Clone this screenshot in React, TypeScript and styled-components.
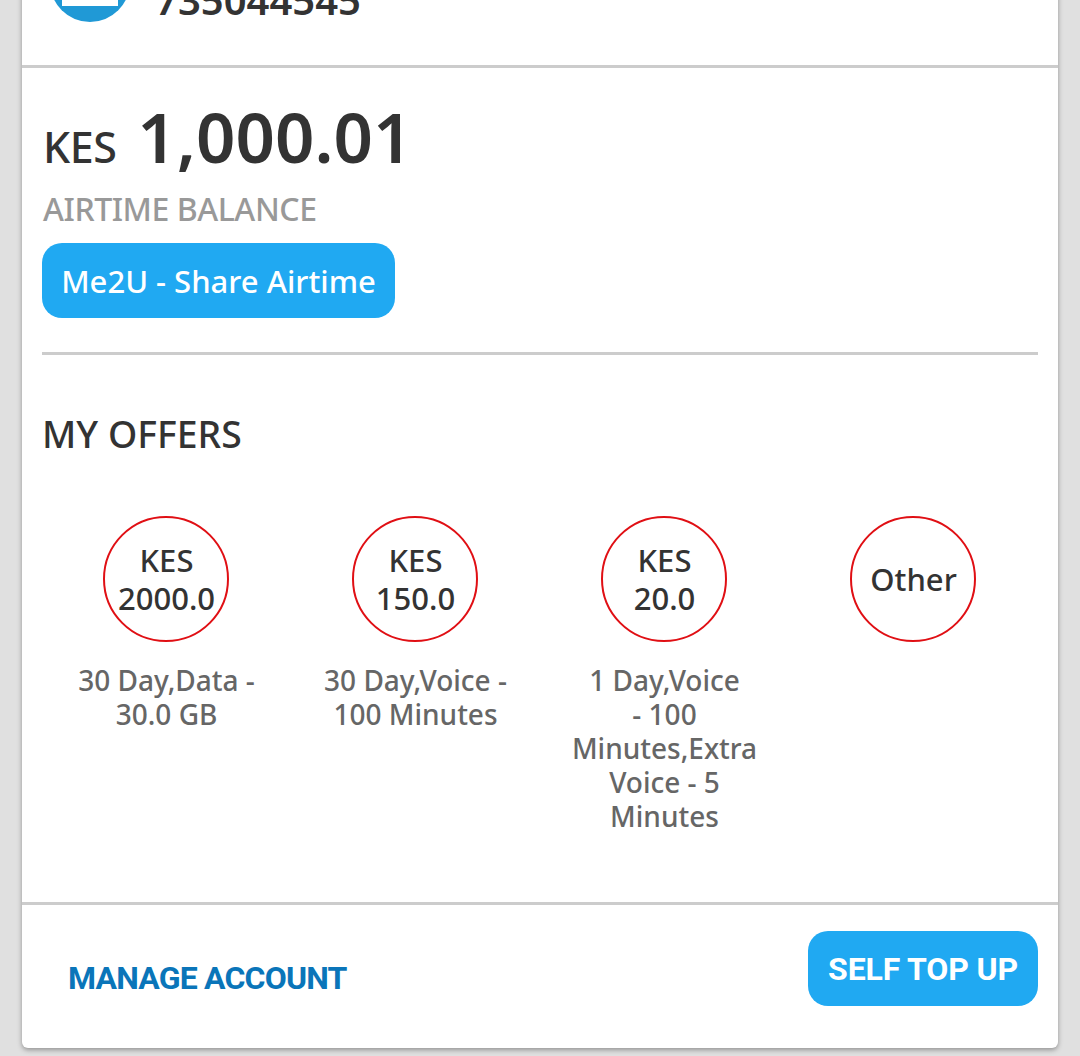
import type { ReactNode } from "react";
import styled, { createGlobalStyle } from "styled-components";

const Keep = styled.span`
  white-space: nowrap;
`;

type OfferItem = { price: string[]; text: ReactNode };

const offers: OfferItem[] = [
  { price: ["KES", "2000.0"], text: "30 Day,Data - 30.0 GB" },
  { price: ["KES", "150.0"], text: "30 Day,Voice - 100 Minutes" },
  {
    price: ["KES", "20.0"],
    text: (
      <>
        1 Day,Voice <Keep>- 100</Keep> Minutes,Extra Voice - 5 Minutes
      </>
    ),
  },
  { price: ["Other"], text: "" },
];

function App() {
  return (
    <>
      <GlobalStyle />
      <Card>
        <Header>
          <Avatar>
            <AvatarBox />
          </Avatar>
          <Phone>735044545</Phone>
        </Header>
        <Balance>
          <Amount>
            <Currency>KES</Currency>
            <Value>1,000.01</Value>
          </Amount>
          <BalanceLabel>AIRTIME BALANCE</BalanceLabel>
          <ShareButton>Me2U - Share Airtime</ShareButton>
        </Balance>
        <Offers>
          <OffersTitle>MY OFFERS</OffersTitle>
          <OfferGrid>
            {offers.map((offer) => (
              <Offer key={offer.price.join("")}>
                <Circle>
                  {offer.price.map((line) => (
                    <span key={line}>{line}</span>
                  ))}
                </Circle>
                <OfferText>{offer.text}</OfferText>
              </Offer>
            ))}
          </OfferGrid>
        </Offers>
        <Footer>
          <ManageLink>MANAGE ACCOUNT</ManageLink>
          <TopUpButton>SELF TOP UP</TopUpButton>
        </Footer>
      </Card>
    </>
  );
}

export default App;

const GlobalStyle = createGlobalStyle`
  html, body {
    margin: 0;
    height: 1056px;
    overflow: hidden;
    background-color: #e0e0e0;
  }
  * {
    box-sizing: border-box;
  }
`;

const Card = styled.div`
  width: 1036px;
  height: 1128px;
  margin: -80px 0 0 22px;
  background-color: #ffffff;
  border-radius: 6px;
  box-shadow: 0 2px 5px rgba(0, 0, 0, 0.35);
  font-family: "Noto Sans", sans-serif;
  display: flex;
  flex-direction: column;
`;

const Header = styled.div`
  height: 148px;
  flex-shrink: 0;
  border-bottom: 3px solid #cccccc;
  display: flex;
  padding: 22px 0 0 28px;
  gap: 25px;
`;

const Avatar = styled.div`
  width: 80px;
  height: 80px;
  border-radius: 50%;
  background-color: #2099d6;
  display: flex;
  justify-content: center;
  padding-top: 14px;
`;

const AvatarBox = styled.div`
  width: 56px;
  height: 50px;
  background-color: #ffffff;
`;

const Phone = styled.div`
  font-size: 40px;
  font-weight: 600;
  line-height: 50px;
  color: #333333;
  margin-top: 33px;
`;

const Balance = styled.div`
  margin: 0 20px;
  height: 287px;
  flex-shrink: 0;
  border-bottom: 3px solid #cccccc;
  display: flex;
  flex-direction: column;
  align-items: flex-start;
`;

const Amount = styled.div`
  display: flex;
  align-items: baseline;
  gap: 21px;
  margin-top: 20px;
  color: #333333;
  height: 96px;
`;

const Currency = styled.span`
  font-size: 43px;
  font-weight: 500;
  letter-spacing: -0.5px;
  margin-left: 1px;
`;

const Value = styled.span`
  font-size: 69px;
  font-weight: 600;
  line-height: 96px;
`;

const BalanceLabel = styled.div`
  font-size: 32px;
  font-weight: 500;
  line-height: 40px;
  color: #999999;
  margin-top: 5px;
  margin-left: 1px;
  letter-spacing: -0.45px;
`;

const ShareButton = styled.button`
  width: 353px;
  height: 75px;
  margin-top: 14px;
  border: none;
  border-radius: 20px;
  background-color: #20a9f2;
  color: #ffffff;
  font-family: "Noto Sans", sans-serif;
  font-size: 31px;
  font-weight: 500;
  padding: 0;
`;

const Offers = styled.div`
  margin: 0 20px;
  flex: 1;
  display: flex;
  flex-direction: column;
`;

const OffersTitle = styled.div`
  font-size: 37.4px;
  font-weight: 500;
  line-height: 44px;
  color: #333333;
  margin-top: 57px;
`;

const OfferGrid = styled.div`
  display: grid;
  grid-template-columns: repeat(4, 249px);
  margin: 60px 0 0 -1px;
`;

const Offer = styled.div`
  display: flex;
  flex-direction: column;
  align-items: center;
  height: 384px;
`;

const Circle = styled.div`
  width: 126px;
  height: 126px;
  border-radius: 50%;
  border: 2px solid #e00f14;
  padding-left: 2px;
  display: flex;
  flex-direction: column;
  align-items: center;
  justify-content: center;
  font-size: 31px;
  font-weight: 500;
  line-height: 38px;
  color: #333333;
`;

const OfferText = styled.div`
  width: 190px;
  margin: 21px 0 0 2px;
  font-size: 28px;
  font-weight: 500;
  line-height: 34px;
  color: #666666;
  text-align: center;
`;

const Footer = styled.div`
  height: 146px;
  flex-shrink: 0;
  border-top: 3px solid #cccccc;
  display: flex;
  align-items: flex-start;
  justify-content: space-between;
  padding: 26px 20px 0 46px;
`;

const ManageLink = styled.div`
  font-family: Roboto, sans-serif;
  font-size: 32px;
  font-weight: 700;
  line-height: 40px;
  letter-spacing: -0.8px;
  color: #0a75b9;
  margin-top: 27px;
`;

const TopUpButton = styled.button`
  width: 230px;
  height: 75px;
  border: none;
  border-radius: 20px;
  background-color: #20a9f2;
  color: #ffffff;
  font-family: Roboto, sans-serif;
  font-size: 32px;
  font-weight: 700;
  letter-spacing: -0.15px;
  padding: 0;
`;
